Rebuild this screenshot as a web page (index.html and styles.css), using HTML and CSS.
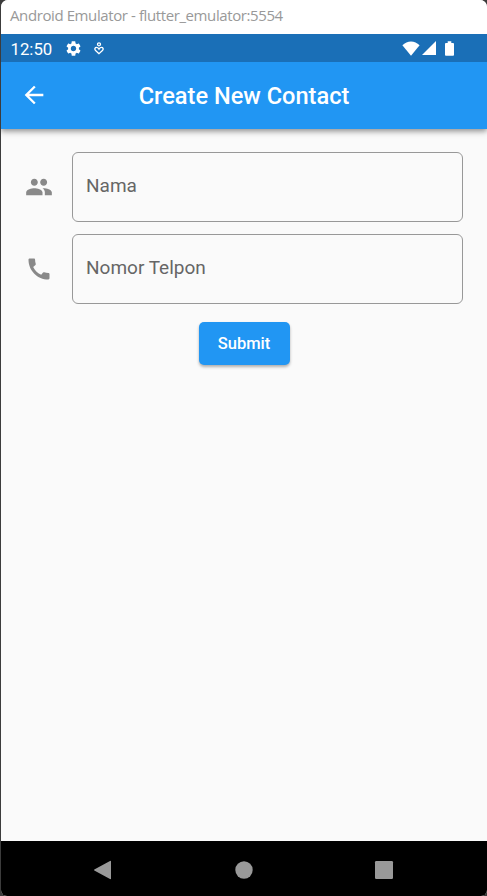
FILE: index.html
```html
<!DOCTYPE html>
<html lang="id">
<head>
<meta charset="utf-8">
<title>Create New Contact</title>
<link rel="stylesheet" href="styles.css">
</head>
<body>
<div class="window">
  <header class="titlebar"><span class="window-title">Android Emulator - flutter_emulator:5554</span></header>
  <div class="status">
    <span class="time">12:50</span>
    <svg class="gear" viewBox="2 2 20 20"><path d="M19.14 12.94c.04-.3.06-.61.06-.94 0-.32-.02-.64-.07-.94l2.03-1.58a.49.49 0 0 0 .12-.61l-1.92-3.32a.488.488 0 0 0-.59-.22l-2.39.96c-.5-.38-1.03-.7-1.62-.94l-.36-2.54a.484.484 0 0 0-.48-.41h-3.84c-.24 0-.43.17-.47.41l-.36 2.54c-.59.24-1.13.57-1.62.94l-2.39-.96c-.22-.08-.47 0-.59.22L2.74 8.87c-.12.21-.08.47.12.61l2.03 1.58c-.05.3-.09.63-.09.94s.02.64.07.94l-2.03 1.58a.49.49 0 0 0-.12.61l1.92 3.32c.12.22.37.29.59.22l2.39-.96c.5.38 1.03.7 1.62.94l.36 2.54c.05.24.24.41.48.41h3.84c.24 0 .44-.17.47-.41l.36-2.54c.59-.24 1.13-.56 1.62-.94l2.39.96c.22.08.47 0 .59-.22l1.92-3.32c.12-.22.07-.47-.12-.61l-2.01-1.58zM12 15.6A3.61 3.61 0 0 1 8.4 12c0-1.98 1.62-3.6 3.6-3.6s3.6 1.62 3.6 3.6-1.62 3.6-3.6 3.6z"/></svg>
    <svg class="heart" viewBox="0 0 10 13"><circle cx="5" cy="2.3" r="1.5"/><path d="M5 11.7 1.6 8.5C.2 7.1.9 5.4 2.5 5.4 3.7 5.4 4.4 6.200 5 7.200 5.600 6.200 6.300 5.400 7.500 5.400c1.600 0 2.300 1.700.9 3.100z"/></svg>
    <div class="signals">
      <svg class="wifi" viewBox="0 0 18 15"><path d="M9 14.700.4 4.300C5.200-.8 12.800-.8 17.600 4.300z"/></svg>
      <svg class="cell" viewBox="0 0 14 14"><path d="M14 0v14H0z"/></svg>
      <svg class="battery" viewBox="0 0 10 16"><path d="M3 0h4v2h2q1 0 1 1v12q0 1-1 1H1q-1 0-1-1V3q0-1 1-1h2z"/></svg>
    </div>
  </div>
  <div class="appbar">
    <svg class="icon back" viewBox="0 0 24 24"><path d="M20 11H7.830l5.590-5.590L12 4l-8 8 8 8 1.410-1.410L7.830 13H20v-2z"/></svg>
    <h1>Create New Contact</h1>
  </div>
  <main class="content">
    <div class="row">
      <svg class="icon" viewBox="0 0 24 24"><path d="M16 11c1.660 0 2.990-1.340 2.990-3S17.660 5 16 5s-3 1.340-3 3 1.340 3 3 3zm-8 0c1.660 0 2.990-1.340 2.990-3S9.660 5 8 5 5 6.340 5 8s1.340 3 3 3zm0 2c-2.330 0-7 1.170-7 3.500V19h14v-2.500C15 14.170 10.330 13 8 13zm8 0c-.29 0-.62.020-.97.050 1.160.84 1.970 1.970 1.970 3.450V19h6v-2.500c0-2.330-4.670-3.500-7-3.500z"/></svg>
      <div class="field"><span>Nama</span></div>
    </div>
    <div class="row">
      <svg class="icon" viewBox="0 0 24 24"><path d="M20.010 15.380c-1.230 0-2.420-.2-3.530-.56a.977.977 0 0 0-1.010.24l-1.570 1.970c-2.830-1.350-5.480-3.900-6.890-6.830l1.950-1.660c.27-.28.35-.67.24-1.020-.37-1.110-.56-2.300-.56-3.530 0-.54-.45-.99-.99-.99H4.190C3.650 3 3 3.240 3 3.990 3 13.280 10.730 21 20.010 21c.71 0 .99-.63.99-1.180v-3.450c0-.54-.45-.99-.99-.99z"/></svg>
      <div class="field"><span>Nomor Telpon</span></div>
    </div>
    <button class="submit">Submit</button>
  </main>
  <nav class="navbar">
    <svg viewBox="0 0 20 20"><path d="M17 1.200v17.600q-.3.600-1 .2L.3 10.500q-.5-.5 0-1L16 1q.7-.4 1 .2z"/></svg>
    <svg viewBox="0 0 20 20"><circle cx="10" cy="10" r="8.700"/></svg>
    <svg viewBox="0 0 20 20"><rect x="1" y="1" width="18" height="18" rx="1.200"/></svg>
  </nav>
</div>
</body>
</html>
```
FILE: styles.css
```css
* { box-sizing: border-box; }
body { margin: 0; background: #3c3c3c; font-family: Roboto, sans-serif; }
svg { display: block; flex: none; fill: currentColor; }
.window {
  height: 896px; margin-left: 1px; display: flex; flex-direction: column;
  background: #fafafa; border-radius: 7px 7px 6px 6px; overflow: hidden;
}
.titlebar {
  height: 34px; padding: 0 9px; background: #fff; color: #999;
  font: 15px/31px "Open Sans", sans-serif; white-space: nowrap;
}
.window-title { letter-spacing: -0.4px; }
.status {
  height: 28px; flex: none; display: flex; align-items: center;
  padding: 0 33px 0 9.500px; background: #1a6fb7; color: #fff;
}
.time { width: 54px; font-size: 16.800px; line-height: 28px; padding-top: 2px; }
.gear { width: 15px; height: 15px; margin-left: 1.500px; }
.heart { width: 10px; height: 13px; margin-left: 13px; fill: none; stroke: currentColor; stroke-width: 1.3; }
.signals { margin-left: auto; display: flex; align-items: center; }
.wifi { width: 18px; height: 15px; }
.cell { width: 14px; height: 14px; margin-left: 2px; }
.battery { width: 9px; height: 15px; margin-left: 9px; }
.appbar {
  height: 66.500px; flex: none; display: grid; grid-template-columns: 65px 1fr 65px;
  align-items: center; background: #2196f3; color: #fff; position: relative;
  box-shadow: 0 2px 5px rgba(0, 0, 0, .35), 0 4px 7px rgba(0, 0, 0, .1);
  clip-path: inset(0 0 -14px 0);
}
.icon { width: 28px; height: 28px; }
.back { margin-left: 19px; }
h1 { margin: 0; padding-top: 2px; text-align: center; font-size: 23.600px; font-weight: 500; line-height: 30px; white-space: nowrap; }
.content { flex: 1; padding: 23.500px 24px 0 24px; }
.row { display: flex; align-items: center; height: 70px; margin-bottom: 12px; color: #898989; }
.field {
  flex: 1; height: 70px; margin-left: 19px; padding-left: 13px;
  display: flex; align-items: center; border: 1px solid #989898; border-radius: 6px;
  font-size: 19px; color: #666;
}
.field span { margin-top: -3px; }
.submit {
  display: block; width: 91px; height: 43px; margin: 18px auto 0; padding: 0; border: 0;
  border-radius: 5px; background: #2196f3; color: #fff;
  font: 500 16.500px Roboto, sans-serif; box-shadow: 0 2px 3px rgba(0, 0, 0, .3);
}
.navbar {
  height: 55px; flex: none; display: flex; justify-content: center; gap: 120px;
  align-items: center; background: #000; color: #999; padding-top: 2px;
}
.navbar svg { width: 20px; height: 20px; }
```
